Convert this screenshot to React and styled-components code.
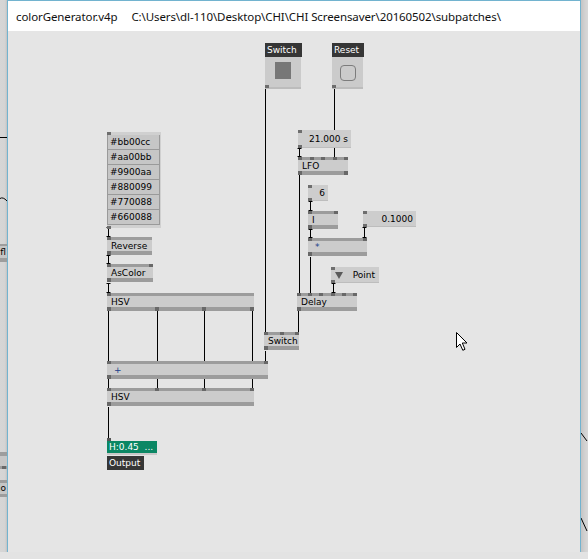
import React from "react";
import styled, { createGlobalStyle } from "styled-components";

// page coordinates of the patch canvas' top-left corner
const ORIGIN = { x: 8, y: 31 };
const place = (x, y, w, h) => ({
  left: x - ORIGIN.x,
  top: y - ORIGIN.y,
  width: w,
  ...(h ? { height: h } : {}),
});

const GlobalStyle = createGlobalStyle`
  html, body { margin: 0; padding: 0; background: #e3e3e3; }
  body { font-family: "DejaVu Sans", Verdana, sans-serif; }
`;

const Desk = styled.div`
  display: flex;
  width: 588px;
  height: 559px;
  overflow: hidden;
  background: #e3e3e3;
`;

const Backdrop = styled.div`
  position: relative;
  flex: none;
  width: 7px;
  height: 552px;
  overflow: hidden;
  background: ${(p) =>
    p.$side === "left"
      ? "linear-gradient(to right, #d6d6d6 0, #d4d4d4 5px, #c2c2c2 7px)"
      : "linear-gradient(to right, #c4c4c4 0, #d2d2d2 4px, #d8d8d8 7px)"};
`;

const Window = styled.div`
  flex: none;
  width: 574px;
  height: 552px;
  box-sizing: border-box;
  border: 1px solid #72b3cf;
  border-bottom: none;
  display: flex;
  flex-direction: column;
`;

const TitleBar = styled.div`
  height: 30px;
  flex: none;
  display: flex;
  align-items: center;
  padding-left: 8px;
  background: #fff;
  font-family: "Noto Sans", "Open Sans", sans-serif;
  font-size: 11.5px;
  letter-spacing: -0.1px;
  color: #111;
  white-space: nowrap;
`;

const TitlePath = styled.span`
  margin-left: 14px;
`;

const Canvas = styled.div`
  position: relative;
  flex: 1;
  background: #e5e5e5;
  overflow: hidden;
`;

const LinkLayer = styled.svg`
  position: absolute;
  left: 0;
  top: 0;
`;

/* ---------- generic node ---------- */
const NodeBox = styled.div`
  position: absolute;
  display: flex;
  flex-direction: column;
  height: 18px;
  background: #cccccc;
`;

const PinStrip = styled.div`
  display: flex;
  justify-content: space-between;
  height: ${(p) => p.$h}px;
  background: #9c9c9c;
`;

const Pin = styled.span`
  width: 4px;
  height: 100%;
  background: #686868;
`;

const NodeLabel = styled.div`
  flex: 1;
  height: 11px;
  padding-left: ${(p) => (p.$op ? 7 : 4)}px;
  font-size: 9px;
  line-height: 13px;
  color: ${(p) => (p.$op ? "#1d3f8a" : "#000")};
  white-space: nowrap;
`;

const Node = ({ label, x, y, w, top, bottom, op }) => (
  <NodeBox style={place(x, y, w)}>
    <PinStrip $h={3}>
      {Array.from({ length: top }, (_, i) => (
        <Pin key={i} />
      ))}
    </PinStrip>
    <NodeLabel $op={op}>{label}</NodeLabel>
    <PinStrip $h={4}>
      {Array.from({ length: bottom }, (_, i) => (
        <Pin key={i} />
      ))}
    </PinStrip>
  </NodeBox>
);

/* ---------- value io boxes ---------- */
const ValueBox = styled.div`
  position: absolute;
  box-sizing: border-box;
  display: flex;
  align-items: center;
  justify-content: flex-end;
  padding-right: 3px;
  padding-top: 1px;
  background: #cdcdcd;
  border-bottom: 1px solid #bdbdbd;
  font-size: 9px;
  color: #000;
`;

const CornerPin = styled.span`
  position: absolute;
  left: 0;
  ${(p) => (p.$bottom ? "bottom: -1px;" : "top: 0;")}
  width: 4px;
  height: 3px;
  background: #6e6e6e;
`;

const SpreadBox = styled.div`
  position: absolute;
  display: flex;
  flex-direction: column;
  padding: 3px 1px 3px 0;
  background: #d0d0d0;
`;

const SpreadCell = styled.div`
  height: 14px;
  border: 1px solid #9a9a9a;
  border-top: none;
  background: #c6c6c6;
  padding-left: 2px;
  font-size: 9px;
  line-height: 15px;
  color: #000;
  &:first-child {
    border-top: 1px solid #9a9a9a;
    height: 13px;
    line-height: 14px;
  }
`;

const EnumBox = styled(ValueBox)`
  justify-content: space-between;
  padding: 1px 4px 0 4px;
`;

const Triangle = styled.span`
  width: 0;
  height: 0;
  border-left: 4px solid transparent;
  border-right: 4px solid transparent;
  border-top: 7px solid #5a5a5a;
`;

/* ---------- toggle / bang ---------- */
const IoLabel = styled.div`
  position: absolute;
  height: 14px;
  padding: 0 2px;
  background: #363636;
  color: #fff;
  font-size: 9px;
  line-height: 15px;
  white-space: nowrap;
`;

const ToggleBox = styled.div`
  position: absolute;
  display: flex;
  justify-content: center;
  padding-top: 5px;
  box-sizing: border-box;
  background: #cbcbcb;
  border-bottom: 2px solid #bcbcbc;
`;

const ToggleMark = styled.span`
  width: 16px;
  height: 17px;
  box-sizing: border-box;
  ${(p) =>
    p.$ring
      ? "border: 1px solid #7c7c7c; border-radius: 4px; margin-top: 3px; height: 16px;"
      : "background: #777;"}
`;

/* ---------- output box ---------- */
const OutputWrap = styled.div`
  position: absolute;
  display: flex;
  flex-direction: column;
  align-items: flex-start;
`;

const OutTopPin = styled.span`
  width: 4px;
  height: 3px;
  background: #555;
`;

const OutValue = styled.div`
  width: 50px;
  height: 14px;
  background: #0b8764;
  color: #fff;
  font-size: 9px;
  line-height: 13px;
  padding-left: 2px;
  box-sizing: border-box;
  white-space: pre;
  border-bottom: 2px solid #c8c8c8;
`;

const OutLabel = styled(IoLabel)`
  position: static;
  margin-top: 1px;
  width: 33px;
`;

/* ---------- backdrop fragments (other patch behind the window) ---------- */
const Fragment = styled.div`
  position: absolute;
  right: 0;
  width: 14px;
  display: flex;
  flex-direction: column;
  background: #c6c6c6;
  font-size: 9px;
  color: #000;
`;

const FragStrip = styled.div`
  height: ${(p) => p.$h}px;
  background: #9d9d9d;
  display: flex;
  justify-content: flex-end;
`;

const FragText = styled.div`
  height: ${(p) => p.$h}px;
  line-height: ${(p) => p.$h}px;
  text-align: right;
  padding-right: 1px;
  white-space: nowrap;
  overflow: hidden;
`;

const Cursor = styled.svg`
  position: absolute;
`;

const Doodle = styled.svg`
  position: absolute;
  left: 0;
  top: 0;
`;

const NODES = [
  { label: "Reverse", x: 107, y: 237, w: 45, top: 1, bottom: 1 },
  { label: "AsColor", x: 107, y: 264, w: 46, top: 2, bottom: 1 },
  { label: "HSV", x: 107, y: 293, w: 147, top: 1, bottom: 4 },
  { label: "LFO", x: 298, y: 157, w: 50, top: 5, bottom: 2 },
  { label: "I", x: 308, y: 211, w: 30, top: 2, bottom: 1 },
  { label: "*", x: 308, y: 238, w: 59, top: 2, bottom: 1, op: true },
  { label: "Delay", x: 297, y: 293, w: 60, top: 6, bottom: 1 },
  { label: "Switch", x: 264, y: 332, w: 35, top: 3, bottom: 1 },
  { label: "+", x: 107, y: 361, w: 161, top: 2, bottom: 1, op: true },
  { label: "HSV", x: 107, y: 388, w: 147, top: 4, bottom: 1 },
];

const VALUES = [
  { text: "21.000 s", x: 298, y: 130, w: 53, h: 18 },
  { text: "6", x: 308, y: 185, w: 20, h: 16 },
  { text: "0.1000", x: 363, y: 211, w: 53, h: 16 },
];

const SPREAD = ["#bb00cc", "#aa00bb", "#9900aa", "#880099", "#770088", "#660088"];

// x1, y1, x2, y2, short links show little end marks
const LINKS = [
  [265.5, 89, 265.5, 332],
  [334.5, 89, 334.5, 157],
  [299.5, 148, 299.5, 157, true],
  [299.5, 175, 299.5, 293],
  [310.5, 201, 310.5, 211, true],
  [310.5, 229, 310.5, 238, true],
  [364.5, 227, 364.5, 238, true],
  [310.5, 257, 310.5, 293],
  [333.5, 283, 333.5, 293, true],
  [298.5, 311, 298.5, 332],
  [108.5, 227, 108.5, 237, true],
  [108.5, 255, 108.5, 264, true],
  [108.5, 283, 108.5, 293, true],
  [108.5, 311, 108.5, 361],
  [157.5, 311, 157.5, 388],
  [204.5, 311, 204.5, 388],
  [252.5, 311, 252.5, 388],
  [265.5, 351, 265.5, 361],
  [108.5, 379, 108.5, 388],
  [108.5, 407, 108.5, 441],
];

const Links = () => (
  <LinkLayer width="572" height="521" viewBox="8 31 572 521">
    {LINKS.map(([x1, y1, x2, y2, tick], i) => (
      <g key={i} stroke="#000" strokeWidth="1" fill="none">
        <line x1={x1} y1={y1} x2={x2} y2={y2} />
        {tick && (
          <path d={`M${x1 - 2} ${y1 + 0.5} H${x1 + 2} M${x2 - 2} ${y2 - 0.5} H${x2 + 2}`} />
        )}
      </g>
    ))}
  </LinkLayer>
);

const Toggle = ({ label, x, w, ring }) => (
  <>
    <IoLabel style={place(x, 43, w - 4)}>{label}</IoLabel>
    <ToggleBox style={place(x, 57, w - 1, 32)}>
      <ToggleMark $ring={ring} />
      <CornerPin $bottom />
    </ToggleBox>
  </>
);

export default function App() {
  return (
    <Desk>
      <GlobalStyle />
      <Backdrop $side="left">
        <Doodle width="7" height="552">
          <line x1="0" y1="137.5" x2="7" y2="137.5" stroke="#000" />
          <path d="M0 198.5 Q3 196.5 7 201" stroke="#000" fill="none" />
        </Doodle>
        <Fragment style={{ top: 244 }}>
          <FragStrip $h={2} />
          <FragText $h={12}>fl</FragText>
          <FragStrip $h={4} />
        </Fragment>
        <Fragment style={{ top: 452 }}>
          <FragStrip $h={4} />
          <FragText $h={10} />
          <FragStrip $h={3}>
            <Pin style={{ marginRight: 1 }} />
          </FragStrip>
        </Fragment>
        <Fragment style={{ top: 480 }}>
          <FragStrip $h={3} />
          <FragText $h={11}>io</FragText>
          <FragStrip $h={3} />
        </Fragment>
      </Backdrop>

      <Window>
        <TitleBar>
          <span>colorGenerator.v4p</span>
          <TitlePath>C:\Users\dl-110\Desktop\CHI\CHI Screensaver\20160502\subpatches\</TitlePath>
        </TitleBar>
        <Canvas>
          <Links />

          <Toggle label="Switch" x={265} w={37} />
          <Toggle label="Reset" x={332} w={32} ring />

          <SpreadBox style={place(107, 132, 53)}>
            <CornerPin />
            {SPREAD.map((c) => (
              <SpreadCell key={c}>{c}</SpreadCell>
            ))}
            <CornerPin $bottom />
          </SpreadBox>

          {VALUES.map((v) => (
            <ValueBox key={v.text} style={place(v.x, v.y, v.w, v.h)}>
              <CornerPin />
              {v.text}
              <CornerPin $bottom />
            </ValueBox>
          ))}

          <EnumBox style={place(331, 267, 48, 16)}>
            <CornerPin />
            <Triangle />
            <span>Point</span>
            <CornerPin $bottom />
          </EnumBox>

          {NODES.map((n) => (
            <Node key={`${n.label}-${n.y}`} {...n} />
          ))}

          <OutputWrap style={place(107, 438, 50)}>
            <OutTopPin />
            <OutValue>{"H:0.45  ..."}</OutValue>
            <OutLabel>Output</OutLabel>
          </OutputWrap>

          <Cursor style={place(455, 331, 14, 21)} viewBox="0 0 14 21">
            <path
              d="M1.5 1.5 V16.5 L5 13 L7.8 19.3 L10 18.3 L7.3 12 H12 Z"
              fill="#fff"
              stroke="#000"
              strokeWidth="1"
              strokeLinejoin="miter"
            />
          </Cursor>
        </Canvas>
      </Window>

      <Backdrop $side="right">
        <Doodle width="7" height="552">
          <line x1="0" y1="433" x2="6" y2="441" stroke="#000" />
          <line x1="0" y1="518" x2="6" y2="531" stroke="#000" />
        </Doodle>
      </Backdrop>
    </Desk>
  );
}
